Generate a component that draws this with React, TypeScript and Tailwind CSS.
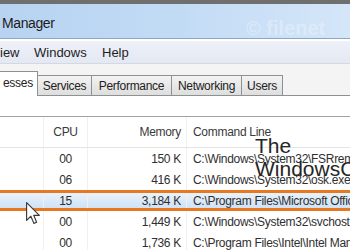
const rows = [
  { cpu: "00", mem: "150 K", cmd: "C:\\Windows\\System32\\FSRremo.exe" },
  { cpu: "06", mem: "416 K", cmd: "C:\\Windows\\System32\\osk.exe" },
  { cpu: "15", mem: "3,184 K", cmd: "C:\\Program Files\\Microsoft Office\\Office14", selected: true },
  { cpu: "00", mem: "1,449 K", cmd: "C:\\Windows\\System32\\svchost.exe" },
  { cpu: "00", mem: "1,736 K", cmd: "C:\\Program Files\\Intel\\Intel Management" },
];

const tabs = [
  { label: "Services", w: "w-[54px]" },
  { label: "Performance", w: "w-[80px]" },
  { label: "Networking", w: "w-[70px]" },
  { label: "Users", w: "w-[41px]" },
];

function Cursor() {
  return (
    <svg
      className="absolute left-[26px] top-[202px]"
      width="15"
      height="23"
      viewBox="0 0 13 20"
    >
      <path
        d="M0.5 0.5 L0.5 16 L4.2 12.4 L6.8 18.6 L9.2 17.6 L6.7 11.6 L11.6 11.6 Z"
        fill="#ffffff"
        stroke="#3a3a3a"
        strokeWidth="1"
        strokeLinejoin="round"
      />
    </svg>
  );
}

export default function App() {
  return (
    <div className="relative w-[350px] h-[250px] overflow-hidden bg-white font-['Liberation_Sans',Arial,sans-serif] text-[#2f2f2f]">
      {/* window frame */}
      <div className="h-[4px] bg-[#6f6f6f]" />
      <div className="relative h-[34px] bg-gradient-to-r from-[#b7d3f1] via-[#c2dbf5] to-[#d4e6f8] flex items-center pl-[2px] pt-[4px]">
        <span className="text-[14px] tracking-[-0.4px] text-[#1c1c1c]">Manager</span>
        <span className="absolute left-[246px] top-[9px] text-[20px] font-bold text-white/30 whitespace-nowrap">
          © filenet
        </span>
      </div>
      <div className="h-px bg-[#8ea6bf]" />
      <div className="h-[2px] bg-white" />

      {/* menu */}
      <div className="h-[22px] bg-gradient-to-b from-[#eef1f8] to-[#e3e8f2] flex items-center pt-[2px] text-[13px] text-[#1e1e1e]">
        <span className="w-[34px]">iew</span>
        <span className="w-[68px]">Windows</span>
        <span>Help</span>
      </div>
      <div className="h-px bg-[#d3d8e2]" />

      {/* tabs */}
      <div className="h-[32px] bg-[#f4f4f4] flex items-end text-[12px] tracking-[-0.3px] text-[#222]">
        <div className="ml-[-1px] w-[39px] h-[25px] bg-white border border-b-0 border-[#8c9191] flex items-center pl-[3px] pb-[2px]">
          esses
        </div>
        <div className="flex flex-1 items-end border-b border-[#8c9191] h-[21px]">
          {tabs.map((t) => (
            <div
              key={t.label}
              className={`${t.w} h-[20px] border border-l-0 border-b-0 border-[#8c9191] bg-gradient-to-b from-[#f3f3f3] to-[#dedede] flex items-center justify-center`}
            >
              {t.label}
            </div>
          ))}
        </div>
      </div>

      {/* tab page */}
      <div className="h-[20px] bg-white" />
      <div className="h-px bg-[#a3a3a3]" />

      <div className="text-[12px] tracking-[-0.3px]">
        <div className="h-[31px] flex items-center border-b border-[#e3e3e3] text-[#3a3a3a]">
          <div className="w-[44px] h-full border-r border-[#f0f0f0]" />
          <div className="w-[44px] h-full flex items-center justify-center border-r border-[#f0f0f0]">CPU</div>
          <div className="w-[99px] h-full flex items-center justify-end pr-[5px] border-r border-[#f0f0f0]">Memory</div>
          <div className="flex-1 pl-[6px] whitespace-nowrap">Command Line</div>
        </div>
        {rows.map((r, i) => (
          <div
            key={i}
            className={
              r.selected
                ? "h-[21px] flex items-center border-y-[3px] border-[#e8781f] bg-gradient-to-b from-[#e9f2fb] to-[#cfe2f6]"
                : "h-[21px] flex items-center"
            }
          >
            <div className="w-[44px] h-full border-r border-[#f0f0f0]" />
            <div className="w-[44px] h-full flex items-center justify-center border-r border-[#f0f0f0]">{r.cpu}</div>
            <div className="w-[99px] h-full flex items-center justify-end pr-[5px] border-r border-[#f0f0f0]">{r.mem}</div>
            <div className="flex-1 pl-[6px] whitespace-nowrap overflow-hidden">{r.cmd}</div>
          </div>
        ))}
      </div>

      {/* watermark */}
      <div className="absolute left-[255px] top-[134px] text-[21px] leading-[23px] text-[#262626] whitespace-nowrap">
        <div>The</div>
        <div>WindowsClub</div>
      </div>

      <Cursor />
    </div>
  );
}
